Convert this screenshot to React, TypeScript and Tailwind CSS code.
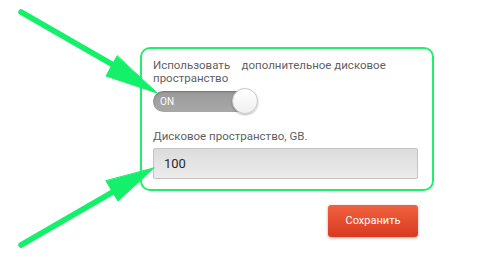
import React from "react";

function Arrows() {
  return (
    <svg className="pointer-events-none absolute left-0 top-0" width="480" height="260" viewBox="0 0 480 260">
      <g fill="#14f06a" stroke="#14f06a" strokeLinecap="round">
        <line x1="21" y1="12" x2="122" y2="70" strokeWidth="5.5" />
        <polygon points="117,56 106,76 157,93" strokeWidth="1" strokeLinejoin="round" />
        <line x1="21" y1="245" x2="118" y2="189" strokeWidth="5.5" />
        <polygon points="106,181 118,201 154,168" strokeWidth="1" strokeLinejoin="round" />
      </g>
    </svg>
  );
}

export default function App() {
  return (
    <div className="relative h-[260px] w-[480px] overflow-hidden bg-white font-['Roboto','Liberation_Sans',sans-serif]">
      <div className="pl-[140px] pt-[47px]">
        <div className="h-[144px] w-[294px] rounded-[10px] border-2 border-[#22ee6e] pl-[11px] pt-[10px]">
          <p className="w-[260px] text-[11.5px] leading-[13px] text-[#5f5f5f]">
            Использовать&nbsp;&nbsp;&nbsp; дополнительное дисковое пространство
          </p>
          <div className="mt-[4px] flex h-[25px] w-[104px] items-center">
            <div className="relative flex h-[21px] w-[100px] items-center rounded-full bg-gradient-to-b from-[#9a9a9a] to-[#a8a8a8] pl-[7px] shadow-[inset_0_1px_2px_rgba(0,0,0,0.25)]">
              <span className="text-[10px] text-white">ON</span>
              <div className="absolute right-[-5px] top-[-3px] h-[26px] w-[26px] rounded-full border border-[#c8c8c8] bg-gradient-to-b from-white to-[#f0f0f0] shadow-[0_1px_2px_rgba(0,0,0,0.3)]" />
            </div>
          </div>
          <p className="mt-[16px] text-[11.5px] leading-[13px] text-[#5f5f5f]">Дисковое пространство, GB.</p>
          <div className="mt-[5px] flex h-[31px] w-[265px] items-center rounded-[2px] border border-[#c4c4c4] bg-gradient-to-b from-[#dcdcdc] to-[#ececec] pl-[10px] text-[13px] text-[#2a2a2a]">
            100
          </div>
        </div>
      </div>
      <div className="flex pl-[328px] pt-[14px]">
        <button className="flex h-[32px] w-[90px] items-center justify-center rounded-[3px] bg-gradient-to-b from-[#f1613f] to-[#d83a1f] text-[11px] text-white shadow-[0_1px_3px_rgba(0,0,0,0.35)]">
          Сохранить
        </button>
      </div>
      <Arrows />
    </div>
  );
}
